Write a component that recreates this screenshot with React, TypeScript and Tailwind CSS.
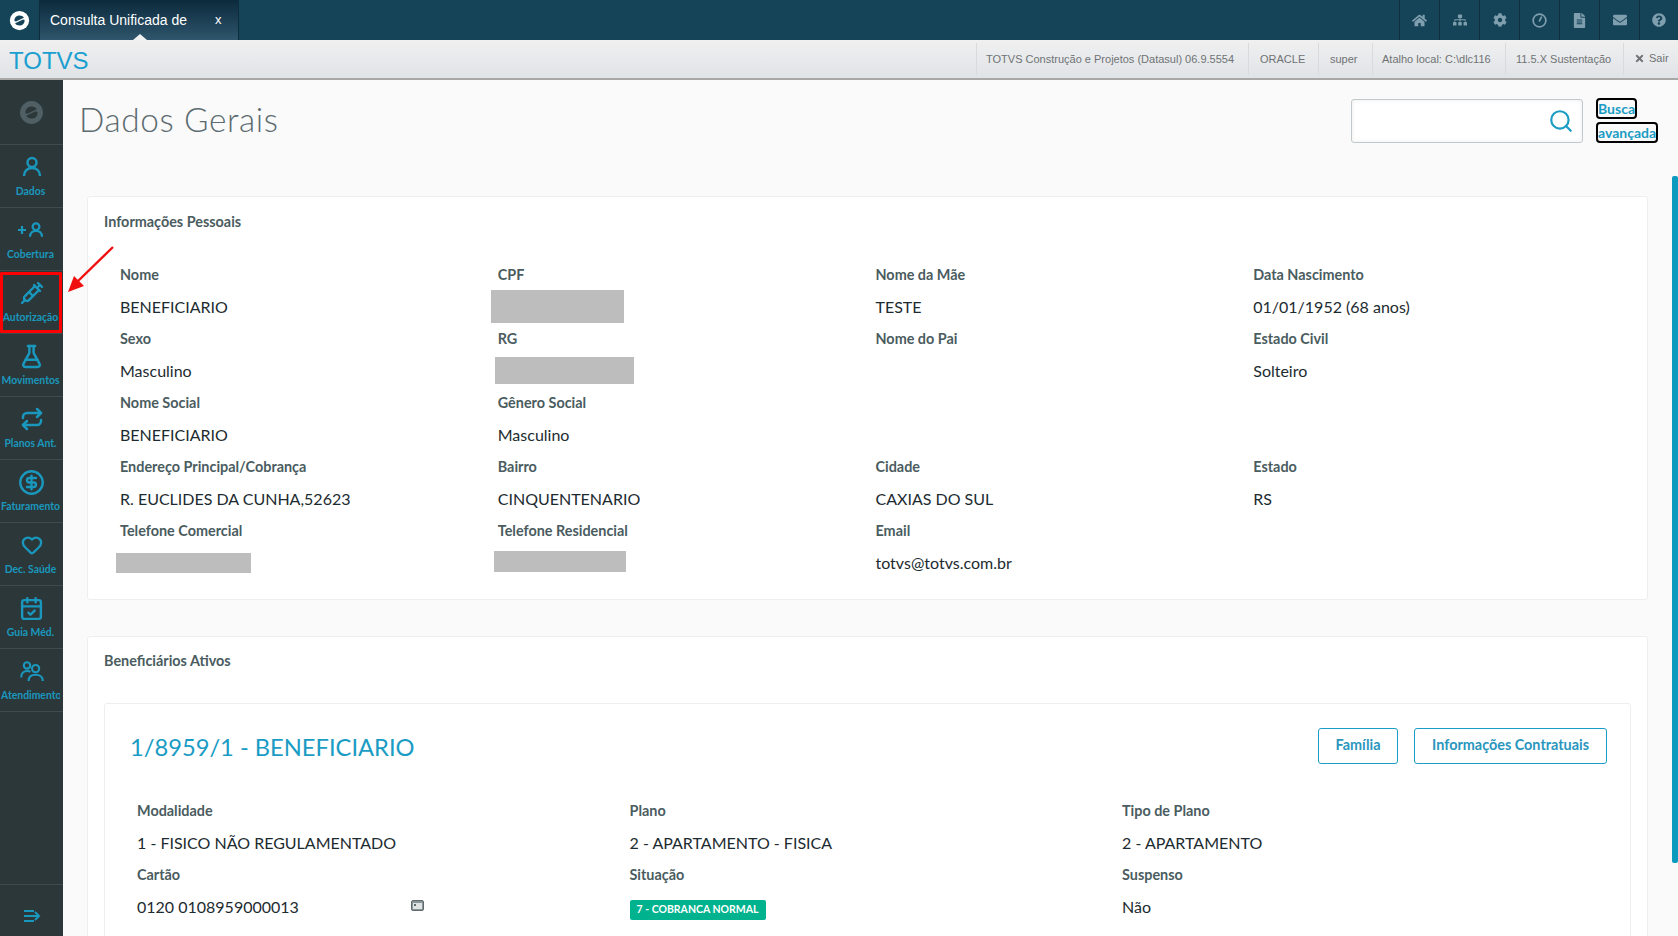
import React from "react";
import { Syringe, FlaskConical, Repeat, CircleDollarSign, Heart, CalendarCheck, Search } from "lucide-react";
import { FaHome, FaSitemap, FaCog, FaFileAlt, FaEnvelope, FaQuestionCircle, FaTimes } from "react-icons/fa";

const Logo = ({ size, color, bg }: { size: number; color: string; bg: string }) => (
  <svg width={size} height={size} viewBox="0 0 24 24">
    <circle cx="12" cy="12" r="11" fill={color} />
    <path d="M6.2 12.6 C5.8 8.6 8.8 6.2 12 6.2 C14.2 6.2 16.2 7.2 17 8.8 L8 13.2 Z" fill={bg} />
    <path d="M17.8 11.4 C18.2 15.4 15.2 17.8 12 17.8 C9.8 17.8 7.8 16.8 7 15.2 L16 10.8 Z" fill={bg} />
  </svg>
);

const Clock = () => (
  <svg width="15" height="15" viewBox="0 0 16 16" fill="none" stroke="#7f9fae" strokeWidth="1.8">
    <circle cx="8" cy="8" r="6.8" />
    <path d="M10 4.5 L8 8.5" strokeLinecap="round" />
  </svg>
);

const UserIcon = ({ size, stroke }: { size: number; stroke: number }) => (
  <svg width={size} height={size} viewBox="0 0 24 24" fill="none" stroke="currentColor" strokeWidth={stroke}>
    <circle cx="12" cy="7.5" r="4.5" />
    <path d="M4 21 C4 16 7.5 13 12 13 S20 16 20 21" />
  </svg>
);

const UsersIcon = () => (
  <svg width="24" height="21" viewBox="0 0 24 21" fill="none" stroke="currentColor" strokeWidth="2.1">
    <circle cx="7" cy="4.4" r="3.2" />
    <path d="M1.2 16.5 C1.2 12 4 10 7.5 10 C8.6 10 9.6 10.3 10.4 10.8" />
    <circle cx="15.6" cy="7.6" r="3.6" />
    <path d="M8.6 20 C8.6 16 11.4 13.8 15.6 13.8 S22.8 16 22.8 20" />
  </svg>
);

const navItems = [
  { label: "Dados", icon: <UserIcon size={24} stroke={2.4} /> },
  {
    label: "Cobertura",
    icon: (
      <span className="flex items-center gap-[1px]">
        <svg width="8" height="8" viewBox="0 0 8 8" stroke="currentColor" strokeWidth="2.2">
          <path d="M0 4 H8 M4 0 V8" />
        </svg>
        <UserIcon size={18} stroke={3} />
      </span>
    ),
  },
  { label: "Autorização", icon: <Syringe size={24} strokeWidth={2.4} /> },
  { label: "Movimentos", icon: <FlaskConical size={25} strokeWidth={2.4} /> },
  { label: "Planos Ant.", icon: <Repeat size={24} strokeWidth={2.5} /> },
  { label: "Faturamento", icon: <CircleDollarSign size={27} strokeWidth={2.1} /> },
  { label: "Dec. Saúde", icon: <Heart size={22} strokeWidth={2.5} /> },
  { label: "Guia Méd.", icon: <CalendarCheck size={25} strokeWidth={2.3} /> },
  { label: "Atendimento", icon: <UsersIcon /> },
];

const Field = ({ label, value, mask }: { label: string; value?: string; mask?: string }) => (
  <div className="min-w-0">
    <div className="h-8 flex items-center text-[14.4px] font-bold text-[#4a5c60]">{label}</div>
    <div className="relative h-8 flex items-center text-[16px] text-[#1c2b30]">
      {value}
      {mask && <div className={`absolute bg-[#bdbdbd] ${mask}`} />}
    </div>
  </div>
);

const topIcons = [
  <FaHome size={15} />,
  <FaSitemap size={14} />,
  <FaCog size={14} />,
  <Clock />,
  <FaFileAlt size={15} />,
  <FaEnvelope size={14} />,
  <FaQuestionCircle size={14} />,
];

const subItems = [
  { t: "TOTVS Construção e Projetos (Datasul) 06.9.5554", w: "w-[272px] pl-[9px]" },
  { t: "ORACLE", w: "w-[70px] pl-[11px]" },
  { t: "super", w: "w-[54px] pl-[11px]" },
  { t: "Atalho local: C:\\dlc116", w: "w-[133px] pl-[9px]" },
  { t: "11.5.X Sustentação", w: "w-[118px] pl-[10px]" },
];

export default function App() {
  return (
    <div className="relative h-[936px] w-[1678px] overflow-hidden flex flex-col bg-[#fafafa] font-['Lato','Noto_Sans',sans-serif]">
      <header className="h-10 shrink-0 flex bg-[#154358] font-['Liberation_Sans',sans-serif]">
        <div className="w-[39px] flex items-center justify-center">
          <Logo size={21} color="#ffffff" bg="#154358" />
        </div>
        <div className="relative w-[200px] flex items-center pl-[10px] border-x border-[#0d2d3d] bg-gradient-to-b from-[#0b2a3c] to-[#2f566d] text-white text-[14px]">
          <span>Consulta Unificada de</span>
          <span className="ml-[28px] text-[13px]">x</span>
          <span className="absolute left-[93px] bottom-0 w-0 h-0 border-x-[7px] border-x-transparent border-b-[6px] border-b-[#eef0f1]" />
        </div>
        <div className="ml-auto flex">
          {topIcons.map((ic, i) => (
            <div key={i} className={`h-10 ${i === 6 ? "w-[39px]" : "w-10"} flex items-center justify-center border-l border-[#0e3040] text-[#7f9fae]`}>
              {ic}
            </div>
          ))}
        </div>
      </header>

      <div className="h-10 shrink-0 flex items-center bg-gradient-to-b from-[#f0f0f0] to-[#e0e3e7] border-b-2 border-[#a8a8a8] font-['Liberation_Sans',sans-serif]">
        <span className="ml-[9px] mt-[4px] text-[24px] leading-none text-[#1a9fd0]">TOTVS</span>
        <div className="ml-auto flex h-[32px] self-start mt-[3px] text-[11px] text-[#6f7376]">
          {subItems.map(({ t, w }) => (
            <div key={t} className={`${w} flex items-center border-l border-[#d8dadc] whitespace-nowrap`}>{t}</div>
          ))}
          <div className="w-[55px] flex items-center pl-[10px] border-l border-[#d8dadc] whitespace-nowrap">
            <FaTimes size={11} className="mr-[4px] mb-[2px]" />
            <span className="mb-[2px]">Sair</span>
          </div>
        </div>
      </div>

      <div className="flex flex-1 min-h-0">
        <aside className="w-[63px] shrink-0 flex flex-col bg-[#2c373a] text-[#1a97bd]">
          <div className="h-[65px] shrink-0 pt-[1px] flex items-center justify-center border-b border-[#3f4b4e]">
            <Logo size={25} color="#4f5f63" bg="#2c373a" />
          </div>
          {navItems.map((n) => (
            <div key={n.label} className="h-[63px] shrink-0 flex flex-col items-center border-b border-[#3f4b4e] last:border-b-0 overflow-hidden">
              <div className="h-[24px] mt-[10px] flex items-center justify-center">{n.icon}</div>
              <div className="mt-[5px] w-[59px] self-start ml-[1px] text-[10.4px] leading-[14px] font-bold text-center whitespace-nowrap overflow-hidden">{n.label}</div>
            </div>
          ))}
          <div className="mt-auto h-[52px] shrink-0 pt-[10px] flex items-center justify-center border-t border-[#3f4b4e]">
            <svg width="18" height="14" viewBox="0 0 18 14" fill="none" stroke="#1a97bd" strokeWidth="2">
              <path d="M1 2 H11 M1 7 H16 M1 12 H11 M12 3 L16 7 L12 11" />
            </svg>
          </div>
        </aside>

        <main className="flex-1 min-w-0 relative overflow-hidden pl-6 pr-[30px]">
          <div className="flex items-start h-[116px]">
            <h1 className="ml-[-8px] mt-[18px] text-[33.4px] leading-[42px] font-light tracking-[0.6px] text-[#5c6b70]">Dados Gerais</h1>
            <div className="ml-auto mr-[13px] mt-[19px] w-[232px] h-[44px] flex items-center justify-end pr-[8px] bg-white border border-[#c2c8cb] rounded-[3px] shadow-[inset_0_0_4px_rgba(0,0,0,0.08)]">
              <Search size={26} strokeWidth={2} className="text-[#1a9cc4]" />
            </div>
            <div className="w-[64px] mr-[-12px] mt-[17px] text-[14px] font-bold leading-[24px] text-[#1a9cc4]">
              <span className="border-2 border-black rounded-[4px]">Busca</span>
              <br />
              <span className="border-2 border-black rounded-[4px]">avançada</span>
            </div>
          </div>

          <section className="h-[404px] bg-white border border-[#eeeeee] rounded-[3px] pt-[13px] px-4">
            <h2 className="h-6 flex items-center text-[14.4px] font-bold text-[#4a5c60]">Informações Pessoais</h2>
            <div className="mt-[25px] pl-[16px] grid grid-cols-4">
              <Field label="Nome" value="BENEFICIARIO" />
              <Field label="CPF" mask="left-[-7px] top-[-1px] w-[133px] h-[33px]" />
              <Field label="Nome da Mãe" value="TESTE" />
              <Field label="Data Nascimento" value="01/01/1952 (68 anos)" />
              <Field label="Sexo" value="Masculino" />
              <Field label="RG" mask="left-[-3px] top-[2px] w-[139px] h-[27px]" />
              <Field label="Nome do Pai" />
              <Field label="Estado Civil" value="Solteiro" />
              <Field label="Nome Social" value="BENEFICIARIO" />
              <Field label="Gênero Social" value="Masculino" />
              <div />
              <div />
              <Field label="Endereço Principal/Cobrança" value="R. EUCLIDES DA CUNHA,52623" />
              <Field label="Bairro" value="CINQUENTENARIO" />
              <Field label="Cidade" value="CAXIAS DO SUL" />
              <Field label="Estado" value="RS" />
              <Field label="Telefone Comercial" mask="left-[-4px] top-[6px] w-[135px] h-5" />
              <Field label="Telefone Residencial" mask="left-[-4px] top-[4px] w-[132px] h-[21px]" />
              <Field label="Email" value="totvs@totvs.com.br" />
              <div />
            </div>
          </section>

          <section className="mt-[36px] h-[400px] bg-white border border-[#eeeeee] rounded-[3px] pt-3 px-4">
            <h2 className="h-6 flex items-center text-[14.4px] font-bold text-[#4a5c60]">Beneficiários Ativos</h2>
            <div className="mt-[30px] h-[300px] border border-[#eeeeee] rounded-[3px] pl-[25px] pr-[23px] pt-6">
              <div className="flex items-start h-9">
                <h3 className="pt-[1px] text-[23.7px] leading-[36px] text-[#1a9cc4]">1/8959/1 - BENEFICIARIO</h3>
                <div className="ml-auto flex gap-4">
                  <button className="h-9 w-20 pb-[2px] border border-[#1a9cc4] rounded-[3px] text-[14.4px] font-bold text-[#2a96bd]">Família</button>
                  <button className="h-9 w-[193px] pb-[2px] border border-[#1a9cc4] rounded-[3px] text-[14.4px] font-bold text-[#2a96bd]">Informações Contratuais</button>
                </div>
              </div>
              <div className="mt-[31px] pl-[7px] grid grid-cols-[492.5px_492.5px_1fr]">
                <Field label="Modalidade" value="1 - FISICO NÃO REGULAMENTADO" />
                <Field label="Plano" value="2 - APARTAMENTO - FISICA" />
                <Field label="Tipo de Plano" value="2 - APARTAMENTO" />
                <div className="min-w-0">
                  <div className="h-8 flex items-center text-[14.4px] font-bold text-[#4a5c60]">Cartão</div>
                  <div className="h-8 flex items-center text-[16px] text-[#1c2b30]">
                    <span className="w-[274px]">0120 0108959000013</span>
                    <svg width="13" height="11" viewBox="0 0 13 11" className="mb-[3px]">
                      <rect x="0.5" y="0.5" width="12" height="10" rx="1.5" fill="#8a9597" stroke="#5f6b6e" />
                      <rect x="2" y="3" width="9" height="6" fill="#dfe3e4" />
                      <rect x="3" y="4" width="2" height="2" fill="#5f6b6e" />
                    </svg>
                  </div>
                </div>
                <div className="min-w-0">
                  <div className="h-8 flex items-center text-[14.4px] font-bold text-[#4a5c60]">Situação</div>
                  <div className="h-8 pt-[6px] flex items-center">
                    <span className="h-5 w-[136px] flex items-center justify-center rounded-[2px] bg-[#00b28e] text-white text-[10.5px] font-bold">7 - COBRANCA NORMAL</span>
                  </div>
                </div>
                <Field label="Suspenso" value="Não" />
              </div>
            </div>
          </section>

          <div className="absolute right-0 top-[96px] w-[6px] h-[687px] rounded-[2px] bg-[#0c9abe]" />
        </main>
      </div>

      <div className="absolute left-0 top-[272px] w-[62px] h-[61px] border-[3px] border-[#ff0000] rounded-[1px]" />
      <svg className="absolute left-[66px] top-[245px]" width="50" height="50" viewBox="0 0 50 50">
        <path d="M47 2 L10 38" stroke="#f01010" strokeWidth="2.4" />
        <path d="M2 47 L8 31 L18 41 Z" fill="#f01010" />
      </svg>
    </div>
  );
}
